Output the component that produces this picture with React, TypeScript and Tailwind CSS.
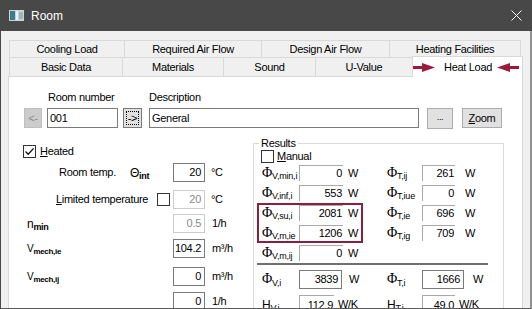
import React from 'react';

const topTabs = [
  { label: 'Cooling Load', w: 'w-[115px]' },
  { label: 'Required Air Flow', w: 'w-[137px]' },
  { label: 'Design Air Flow', w: 'w-[128px]' },
  { label: 'Heating Facilities', w: 'w-[132px]' },
];

const bottomTabs = [
  { label: 'Basic Data', w: 'w-[113px]' },
  { label: 'Materials', w: 'w-[101px]' },
  { label: 'Sound', w: 'w-[92px]' },
  { label: 'U-Value', w: 'w-[97px]' },
];

// right-aligned edit box
const Edit = ({ value, className = '', disabled = false }: { value: string; className?: string; disabled?: boolean }) => (
  <div
    className={`h-[19px] flex items-center justify-end pr-[3px] bg-white border ${
      disabled ? 'border-[#cccccc] text-[#8a8a8a]' : 'border-[#7a7a7a] text-black'
    } ${className}`}
  >
    {value}
  </div>
);

// read-only result field
const Field = ({ value, className = '' }: { value: string; className?: string }) => (
  <div className={`h-[16px] flex items-center justify-end pr-[1px] border-l border-t border-[#a9a9a9] ${className}`}>
    {value}
  </div>
);

const Check = ({ checked = false }: { checked?: boolean }) => (
  <div className="w-[13px] h-[13px] shrink-0 border border-[#333333] bg-white flex items-center justify-center">
    {checked && (
      <svg width="11" height="11" viewBox="0 0 11 11">
        <path d="M1.5 5.5 L4.2 8.2 L9.6 2.4" fill="none" stroke="#111" strokeWidth="1.3" />
      </svg>
    )}
  </div>
);

const Phi = ({ sub }: { sub: string }) => (
  <span className="whitespace-nowrap">
    <span className="font-['Liberation_Serif',serif] text-[14px] leading-none">Φ</span>
    <sub className="text-[9px] tracking-[-0.2px]">{sub}</sub>
  </span>
);

const Arrow = ({ flip = false }: { flip?: boolean }) => (
  <svg width="22" height="9" viewBox="0 0 22 9" className={flip ? '-scale-x-100' : ''}>
    <rect x="0" y="3" width="12" height="3" fill="#9b1b3d" />
    <polygon points="9,0 22,4.5 9,9" fill="#9b1b3d" />
  </svg>
);

export default function App() {
  const resultRows = [
    { l: 'V,min,i', lv: '0', r: 'T,ij', rv: '261' },
    { l: 'V,inf,i', lv: '553', r: 'T,iue', rv: '0' },
    { l: 'V,su,i', lv: '2081', r: 'T,ie', rv: '696', red: true },
    { l: 'V,m,ie', lv: '1206', r: 'T,ig', rv: '709' },
    { l: 'V,m,ij', lv: '0' },
  ];

  return (
    <div className="w-[532px] h-[309px] overflow-hidden flex flex-col bg-[#484848] font-['Liberation_Sans',Arial,sans-serif] text-[11px] tracking-[-0.3px] text-black">
      {/* Title bar */}
      <div className="h-[31px] shrink-0 flex items-center pl-[9px] text-white">
        <svg width="15" height="11" viewBox="0 0 15 11">
          <rect x="0" y="0" width="15" height="11" fill="#c7d3d8" />
          <rect x="1" y="1" width="5" height="9" fill="#3e7f86" />
          <rect x="7" y="1" width="2" height="9" fill="#eef3f4" />
          <rect x="10" y="2" width="4" height="7" fill="#9fb4bb" />
        </svg>
        <span className="ml-[7px] text-[12px] tracking-normal">Room</span>
        <svg width="11" height="11" viewBox="0 0 11 11" className="ml-auto mr-[10px]">
          <path d="M0.5 0.5 L10.5 10.5 M10.5 0.5 L0.5 10.5" stroke="#ffffff" strokeWidth="1" />
        </svg>
      </div>

      {/* Body */}
      <div className="flex-1 min-h-0 overflow-hidden bg-[#f0f0f0] border-l border-l-[#4a4a4a] border-r-2 border-r-[#8f8f8f] border-b border-b-[#5a5a5a] pl-[7px] pt-[9px]">
        {/* Tabs */}
        <div className="ml-[1px] w-[514px]">
          <div className="flex h-[17px]">
            {topTabs.map((t, i) => (
              <div
                key={t.label}
                className={`${t.w} border-t border-l border-[#d9d9d9] flex items-center justify-center ${
                  i === topTabs.length - 1 ? 'border-r' : ''
                }`}
              >
                {t.label}
              </div>
            ))}
          </div>
          <div className="flex h-[19px] items-start">
            {bottomTabs.map((t) => (
              <div key={t.label} className={`${t.w} h-[19px] border-t border-l border-[#d9d9d9] flex items-center justify-center`}>
                {t.label}
              </div>
            ))}
            <div className="relative z-10 w-[111px] h-[21px] -mt-[1px] bg-white border-t border-l border-r border-[#d9d9d9] flex items-center">
              <Arrow />
              <span className="ml-[9px]">Heat Load</span>
              <span className="ml-[5px]">
                <Arrow flip />
              </span>
            </div>
          </div>
        </div>

        {/* Panel */}
        <div className="w-[515px] h-[240px] bg-white border border-[#d9d9d9]">
          <div className="flex pt-[13px] pl-[39px] leading-[15px]">
            <span className="w-[101px]">Room number</span>
            <span>Description</span>
          </div>
          <div className="flex items-center mt-[3px] pl-[15px] h-[20px]">
            <div className="w-[18px] h-[20px] bg-[#cccccc] border border-[#bfbfbf] text-[#8a8a8a] flex items-center justify-center">&lt;-</div>
            <div className="ml-[5px] w-[71px] h-[20px] border border-[#7a7a7a] bg-white pl-[2px] flex items-center">001</div>
            <div className="ml-[5px] w-[19px] h-[20px] bg-[#e1e1e1] border border-[#7a7a7a] p-[2px]">
              <div className="w-full h-full border border-dotted border-black flex items-center justify-center">-&gt;</div>
            </div>
            <div className="ml-[7px] w-[270px] h-[20px] border border-[#7a7a7a] bg-white pl-[2px] flex items-center">General</div>
            <div className="ml-[8px] w-[26px] h-[21px] bg-[#e1e1e1] border border-[#adadad] flex items-end justify-center pb-[3px] text-[9px]">...</div>
            <div className="ml-[9px] w-[40px] h-[20px] bg-[#e1e1e1] border border-[#adadad] flex items-center justify-center">
              <span>
                <span className="underline">Z</span>oom
              </span>
            </div>
          </div>

          <div className="flex items-start">
            {/* Left column */}
            <div className="w-[244px] pt-[17px]">
              <div className="flex items-center h-[13px] pl-[14px]">
                <Check checked />
                <span className="ml-[4px]">
                  <span className="underline">H</span>eated
                </span>
              </div>
              <div className="flex items-center h-[19px] mt-[5px]">
                <span className="w-[121px] pl-[50px]">Room temp.</span>
                <span className="w-[43px]">
                  <span className="text-[12px]">Θ</span>
                  <sub className="text-[9px] font-bold">int</sub>
                </span>
                <Edit value="20" className="w-[32px]" />
                <span className="ml-[6px]">°C</span>
              </div>
              <div className="flex items-center h-[19px] mt-[8px]">
                <span className="w-[148px] pl-[47px]">
                  <span className="underline">L</span>imited temperature
                </span>
                <Check />
                <Edit value="20" disabled className="w-[32px] ml-[3px]" />
                <span className="ml-[6px]">°C</span>
              </div>
              <div className="flex items-center h-[19px] mt-[5px]">
                <span className="w-[164px] pl-[18px]">
                  <span className="text-[12px]">n</span>
                  <sub className="text-[9px] font-bold">min</sub>
                </span>
                <Edit value="0.5" disabled className="w-[32px]" />
                <span className="ml-[7px]">1/h</span>
              </div>
              <div className="flex items-center h-[19px] mt-[6px]">
                <span className="w-[164px] pl-[18px]">
                  <span className="text-[10px]">V</span>
                  <sub className="text-[8px] font-bold">mech,ie</sub>
                </span>
                <Edit value="104.2" className="w-[32px] pr-[1px]" />
                <span className="ml-[7px]">m³/h</span>
              </div>
              <div className="flex items-center h-[19px] mt-[9px]">
                <span className="w-[164px] pl-[18px]">
                  <span className="text-[10px]">V</span>
                  <sub className="text-[8px] font-bold">mech,ij</sub>
                </span>
                <Edit value="0" className="w-[32px]" />
                <span className="ml-[7px]">m³/h</span>
              </div>
              <div className="flex items-center h-[19px] mt-[6px]">
                <span className="w-[164px]" />
                <Edit value="0" className="w-[32px]" />
                <span className="ml-[7px]">1/h</span>
              </div>
            </div>

            {/* Results group */}
            <div className="relative w-[251px] h-[200px] mt-[15px] border border-[#dcdcdc]">
              <span className="absolute left-[5px] -top-[8px] bg-white px-[2px] leading-[14px]">Results</span>
              <div className="flex items-center h-[13px] mt-[6px] pl-[7px]">
                <Check />
                <span className="ml-[3px]">
                  <span className="underline">M</span>anual
                </span>
              </div>
              {resultRows.map((r) => (
                <div key={r.l} className="flex items-center h-[20px] pl-[3px]">
                  <div className="relative w-[106px] flex items-center pl-[5px]">
                    <span className="w-[37px]">
                      <Phi sub={r.l} />
                    </span>
                    <Field value={r.lv} className="w-[44px]" />
                    <span className="ml-[5px]">W</span>
                    {r.red && (
                      <div className="absolute left-0 -top-[2px] w-[106px] h-[40px] border-2 border-[#8e1f3b] pointer-events-none" />
                    )}
                  </div>
                  {r.r && (
                    <div className="ml-[24px] flex items-center">
                      <span className="w-[35px]">
                        <Phi sub={r.r} />
                      </span>
                      <Field value={r.rv as string} className="w-[33px]" />
                      <span className="ml-[10px]">W</span>
                    </div>
                  )}
                </div>
              ))}
              <div className="ml-[3px] w-[231px] h-[2px] bg-[#707070]" />
              <div className="flex items-center h-[19px] mt-[5px] pl-[3px]">
                <div className="w-[106px] flex items-center pl-[5px]">
                  <span className="w-[37px]">
                    <Phi sub="V,i" />
                  </span>
                  <Edit value="3839" className="w-[43px] pr-[2px]" />
                  <span className="ml-[7px]">W</span>
                </div>
                <div className="ml-[24px] flex items-center">
                  <span className="w-[35px]">
                    <Phi sub="T,i" />
                  </span>
                  <Edit value="1666" className="w-[42px] pr-[2px]" />
                  <span className="ml-[9px]">W</span>
                </div>
              </div>
              <div className="flex items-center h-[19px] mt-[6px] pl-[3px]">
                <div className="w-[106px] flex items-center pl-[5px]">
                  <span className="w-[37px] text-[12px]">
                    H<sub className="text-[9px]">V,i</sub>
                  </span>
                  <Field value="112.9" className="w-[35px] h-[19px]" />
                  <span className="ml-[4px]">W/K</span>
                </div>
                <div className="ml-[24px] flex items-center">
                  <span className="w-[35px] text-[12px]">
                    H<sub className="text-[9px]">T,i</sub>
                  </span>
                  <Field value="49.0" className="w-[33px] h-[19px]" />
                  <span className="ml-[4px]">W/K</span>
                </div>
              </div>
            </div>
          </div>
        </div>
      </div>
    </div>
  );
}
